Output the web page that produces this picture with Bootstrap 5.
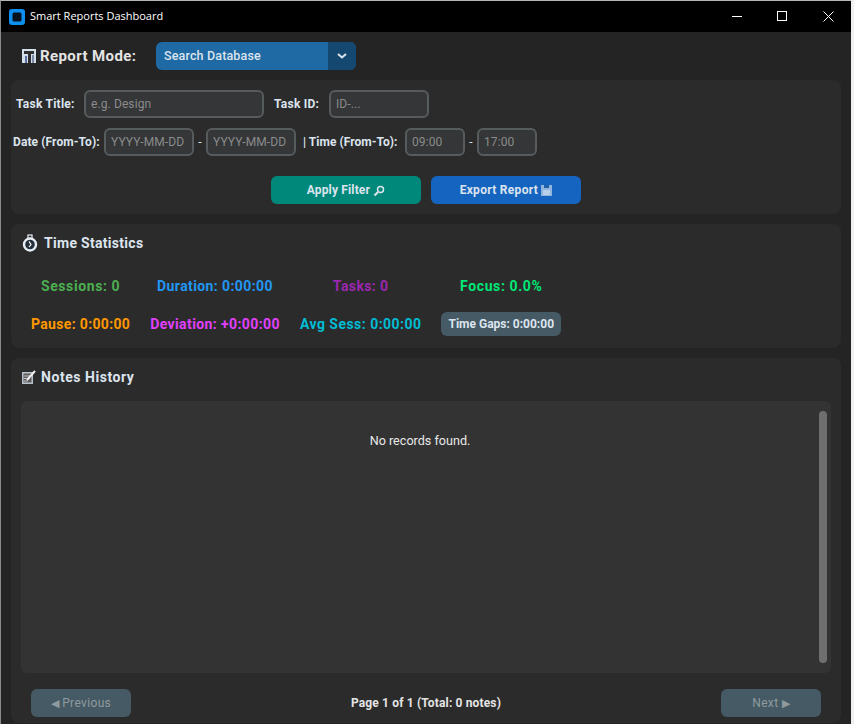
<!DOCTYPE html>
<html lang="en">
<head>
<meta charset="utf-8">
<title>Smart Reports Dashboard</title>
<link rel="stylesheet" href="https://cdn.jsdelivr.net/npm/bootstrap@5.3.0/dist/css/bootstrap.min.css">
<style>
html,body{height:724px;overflow:hidden;background:#f0f0f0;}
body{font-family:Roboto,"Liberation Sans",sans-serif;font-size:12px;color:#e4e4e4;}
.app-window{width:851px;height:724px;background:#242424;border-left:1px solid #8a8a8a;border-top:1px solid #b5b5b5;}
.title-bar{height:31px;background:#000;color:#fff;font-family:"Open Sans",sans-serif;font-size:11px;padding-left:8px;gap:5px;}
.title-logo{width:16px;height:16px;flex:none;}
.win-btns{margin-left:auto;padding-right:17px;gap:35px;}
.win-btns svg{display:block;width:11px;height:11px;}
.mode-row{height:48px;padding-left:21px;}
.mode-label{font-size:15px;font-weight:700;letter-spacing:.4px;width:134px;}
.mode-select{width:200px;height:28px;border-radius:6px;overflow:hidden;background:#1f6aa5;color:#dce4ee;font-weight:500;font-size:12.5px;letter-spacing:.15px;}
.mode-text{flex:1;padding-left:8px;}
.mode-arrow{width:28px;height:28px;background:#144870;}
.pane{background:#2b2b2b;border-radius:8px;margin:0 10px;}
.filter-pane{height:134px;padding-top:10px;}
.field-row{height:28px;margin-bottom:10px;padding-left:2px;font-weight:700;color:#dce4ee;white-space:nowrap;}
.lbl-title{width:68px;margin-left:3px;letter-spacing:.25px;}
.lbl-id{width:55px;margin-left:10px;letter-spacing:.25px;}
.lbl-date{width:91px;letter-spacing:.1px;}
.lbl-time{width:109px;padding-left:7px;letter-spacing:.05px;}
.lbl-dash{width:12px;text-align:center;font-weight:400;}
.form-control.dark-input{height:28px;min-height:28px;padding:0 5px;border:2px solid #565b5e;border-radius:6px;background:#343638;color:#8b8b8b;font-size:12px;letter-spacing:.1px;box-shadow:none;}
.form-control.dark-input::placeholder{color:#8b8b8b;opacity:1;}
.w-180{width:180px}.w-100px{width:100px}.w-90{width:90px}.w-60{width:60px}
.action-row{padding-top:10px;gap:10px;}
.btn.act-btn{width:150px;height:28px;padding:0;border:0;border-radius:6px;color:#dce4ee;font-size:12px;font-weight:700;letter-spacing:.15px;}
.act-teal{background:#00897b;}
.btn.act-blue{background:#1565c0;letter-spacing:.3px;}
.stats-pane{height:124px;margin-top:10px;padding-top:10px;}
.pane-title{font-size:14px;font-weight:700;color:#dce4ee;height:18px;padding-left:11px;letter-spacing:.3px;gap:6px;}
.stat-grid{display:grid;grid-template-columns:auto auto auto auto;justify-content:start;margin:22px 0 0 10px;row-gap:14px;align-items:center;text-align:center;font-size:14px;font-weight:700;line-height:24px;letter-spacing:.4px;}
.stat-grid>div{padding:0 10px;}
.gap-tag{display:block;height:24px;background:#455a64;border-radius:6px;font-size:12px;color:#dce4ee;padding:0 7px;white-space:nowrap;letter-spacing:0;}
.stat-green{color:#4caf50;letter-spacing:.6px}.stat-blue{color:#2196f3}.stat-purple{color:#9c27b0}.stat-mint{color:#00e676;letter-spacing:.6px}
.stat-orange{color:#ff9800;letter-spacing:.33px}.stat-pink{color:#e040fb}.stat-cyan{color:#00bcd4;letter-spacing:.47px}
.notes-pane{height:365px;margin-top:10px;padding-top:10px;}
.notes-title{padding-left:11px;letter-spacing:.55px;gap:5px;}
.notes-box{height:272px;margin:15px 10px 0;background:#333;border-radius:6px;}
.notes-empty{flex:1;text-align:center;padding-top:31px;font-size:12.6px;color:#e8e8e8;line-height:18px;}
.scroll-thumb{width:8px;height:252px;margin:10px 4px 0 0;background:#6f6f6f;border-radius:4px;}
.pager{padding:16px 20px 0;font-weight:700;color:#e4e4e4;letter-spacing:.15px;}
.btn.page-btn{width:100px;height:28px;padding:0;border:0;border-radius:6px;background:#455a64;color:#8f9a9f;font-size:12px;letter-spacing:.35px;opacity:1;}
.tri{font-size:11px;letter-spacing:0;}
</style>
</head>
<body>
<div class="app-window d-flex flex-column">
  <div class="title-bar d-flex align-items-center">
    <svg class="title-logo" viewBox="0 0 16 16"><rect width="16" height="16" rx="3" fill="#0d8fef"/><rect x="3.500" y="3.500" width="9" height="9" rx="1.500" fill="#06121e"/></svg>
    <span>Smart Reports Dashboard</span>
    <div class="win-btns d-flex align-items-center">
      <svg viewBox="0 0 11 11"><path d="M1 5.500h10" stroke="#fff" fill="none"/></svg>
      <svg viewBox="0 0 11 11"><rect x=".5" y=".5" width="9" height="9" stroke="#fff" fill="none"/></svg>
      <svg viewBox="0 0 11 11"><path d="M.5.5l10 10M10.500.5l-10 10" stroke="#fff" fill="none"/></svg>
    </div>
  </div>

  <div class="mode-row d-flex align-items-center">
    <div class="mode-label d-flex align-items-center gap-1">
      <svg width="14" height="14" viewBox="0 0 14 14"><rect width="14" height="14" fill="#d3deeb"/><rect x="2" y="2" width="10" height="3" fill="#2f2f2f"/><rect x="6" y="5" width="3" height="9" fill="#2e2e2e"/><rect x="3" y="7" width="2" height="7" fill="#5a6f9e"/><rect x="10" y="6" width="2" height="8" fill="#7b8aa3"/></svg>
      <span>Report Mode:</span>
    </div>
    <div class="mode-select d-flex align-items-center">
      <span class="mode-text">Search Database</span>
      <span class="mode-arrow d-flex align-items-center justify-content-center">
        <svg width="10" height="6" viewBox="0 0 10 6"><path d="M1 1l4 3.500L9 1" fill="none" stroke="#dce4ee" stroke-width="2"/></svg>
      </span>
    </div>
  </div>

  <div class="pane filter-pane">
    <div class="field-row d-flex align-items-center">
      <span class="lbl-title">Task Title:</span>
      <input class="form-control dark-input w-180" placeholder="e.g. Design">
      <span class="lbl-id">Task ID:</span>
      <input class="form-control dark-input w-100px" placeholder="ID-...">
    </div>
    <div class="field-row d-flex align-items-center">
      <span class="lbl-date">Date (From-To):</span>
      <input class="form-control dark-input w-90" placeholder="YYYY-MM-DD">
      <span class="lbl-dash">-</span>
      <input class="form-control dark-input w-90" placeholder="YYYY-MM-DD">
      <span class="lbl-time">| Time (From-To):</span>
      <input class="form-control dark-input w-60" placeholder="09:00">
      <span class="lbl-dash">-</span>
      <input class="form-control dark-input w-60" placeholder="17:00">
    </div>
    <div class="d-flex justify-content-center action-row">
      <button class="btn act-btn act-teal">Apply Filter
        <svg width="12" height="12" viewBox="0 0 12 12"><circle cx="7.500" cy="4.500" r="3" fill="none" stroke="#dce4ee" stroke-width="1.500"/><path d="M5 7L1.500 10.500" stroke="#dce4ee" stroke-width="2.200"/></svg>
      </button>
      <button class="btn act-btn act-blue">Export Report
        <svg width="11" height="11" viewBox="0 0 11 11"><rect width="11" height="11" fill="#8fb4de"/><rect x="3" y="0" width="5" height="3" fill="#1f5fa8"/><rect x="2" y="5" width="7" height="5" fill="#b9d0ea"/></svg>
      </button>
    </div>
  </div>

  <div class="pane stats-pane">
    <div class="pane-title d-flex align-items-center">
      <svg width="16" height="18" viewBox="0 0 16 18"><circle cx="8" cy="10.500" r="6" fill="#24303c" stroke="#e8eef5" stroke-width="2.400"/><path d="M7 7.500l2 3-2 2.500" stroke="#fff" fill="none" stroke-width="1.200"/><rect x="6" y="1" width="4" height="3.500" fill="none" stroke="#e8eef5" stroke-width="1.200"/></svg>
      <span>Time Statistics</span>
    </div>
    <div class="stat-grid">
      <div class="stat-green">Sessions: 0</div>
      <div class="stat-blue">Duration: 0:00:00</div>
      <div class="stat-purple">Tasks: 0</div>
      <div class="stat-mint">Focus: 0.0%</div>
      <div class="stat-orange">Pause: 0:00:00</div>
      <div class="stat-pink">Deviation: +0:00:00</div>
      <div class="stat-cyan">Avg Sess: 0:00:00</div>
      <div><span class="gap-tag">Time Gaps: 0:00:00</span></div>
    </div>
  </div>

  <div class="pane notes-pane">
    <div class="pane-title notes-title d-flex align-items-center">
      <svg width="14" height="14" viewBox="0 0 14 14"><rect y="2" width="11" height="12" fill="#b9c2cc"/><rect x="1.500" y="3.500" width="8" height="9" fill="#5a5a5a"/><path d="M2 6h6M2 8.500h6M2 11h4" stroke="#c4c4c4"/><path d="M5 10L13 1" stroke="#eee" stroke-width="2"/></svg>
      <span>Notes History</span>
    </div>
    <div class="notes-box d-flex">
      <div class="notes-empty">No records found.</div>
      <div class="scroll-thumb"></div>
    </div>
    <div class="pager d-flex align-items-center justify-content-between">
      <button class="btn page-btn" disabled><span class="tri">&#9664;</span> Previous</button>
      <span>Page 1 of 1 (Total: 0 notes)</span>
      <button class="btn page-btn" disabled>Next <span class="tri">&#9654;</span></button>
    </div>
  </div>
</div>
<script src="https://cdn.jsdelivr.net/npm/bootstrap@5.3.0/dist/js/bootstrap.bundle.min.js"></script>
</body>
</html>
